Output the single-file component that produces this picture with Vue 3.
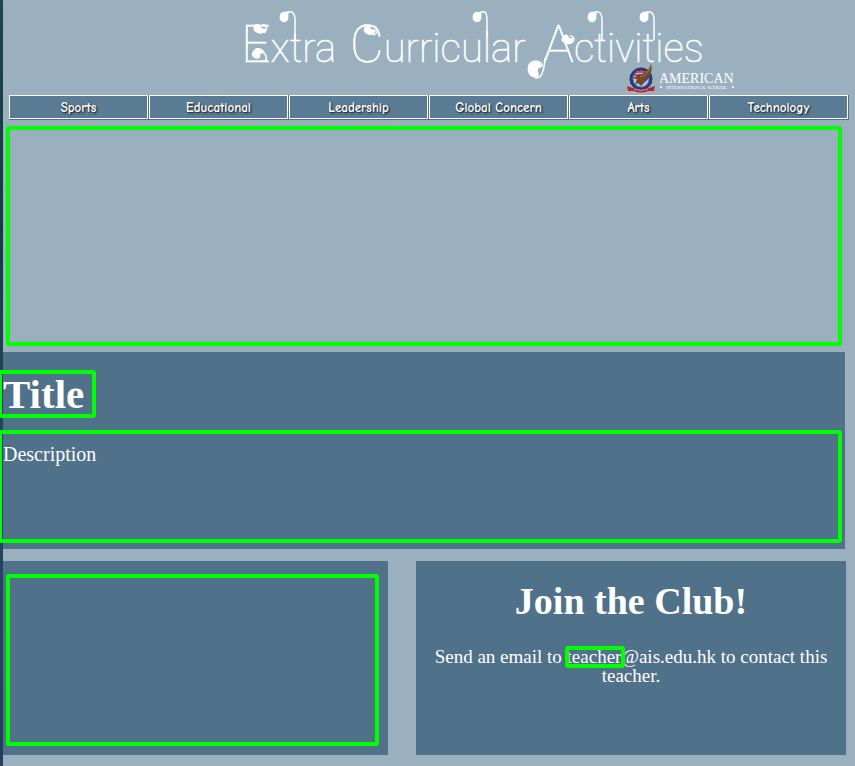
<script setup>
const links = ['Sports', 'Educational', 'Leadership', 'Global Concern', 'Arts', 'Technology']
</script>

<template>
  <div class="page">
    <header class="banner">
      <svg class="banner-art" viewBox="240 0 500 95" width="500" height="95" role="img" aria-label="Extra Curricular Activities, American International School">
        <g class="word">
          <text x="241" y="62"><tspan class="initial">E</tspan>xtra</text>
          <text x="350" y="62"><tspan class="initial">C</tspan>urricular</text>
          <text x="543" y="62"><tspan class="initial">A</tspan>ctivities</text>
        </g>
        <g class="stroke">
          <path d="M285 13C291 10 295 12 295 20V40" />
          <path d="M479 13C485 10 487 12 487 20V36" />
          <path d="M593 13C598 10 602 12 602 20V40" />
          <path d="M644 13C650 10 654 12 654 20V40" />
          <path d="M545 58C544 73 541 79 535 78" />
          <path d="M262 25C267 24 268 29 264 33" />
          <path d="M262 61C267 62 268 57 264 53" />
          <path d="M374 26C379 29 378 34 373 35" />
          <path d="M565 43C574 46 577 36 570 36" />
        </g>
        <g class="blob">
          <path d="M280 15C281 11 287 11 289 14C287 15 290 18 287 21C284 24 278 21 280 15Z" />
          <path d="M473 15C474 11 480 11 482 14C480 15 483 18 480 21C477 24 471 21 473 15Z" />
          <path d="M588 15C589 11 595 11 597 14C595 15 598 18 595 21C592 24 586 21 588 15Z" />
          <path d="M640 15C641 11 647 11 649 14C647 15 650 18 647 21C644 24 638 21 640 15Z" />
          <path d="M254 26C256 22 262 25 261 28L266 29C265 34 259 35 256 32C253 31 253 28 254 26Z" />
          <path d="M253 51C256 46 263 48 265 53L260 54C262 59 256 60 253 57C251 55 252 53 253 51Z" />
          <path d="M364 28C367 24 371 26 371 29L376 30C375 35 370 36 367 34C364 33 363 30 364 28Z" />
          <path d="M562 38C564 33 569 34 569 38L573 38C573 44 566 45 563 42C561 41 561 39 562 38Z" />
          <path d="M528 66C530 59 541 59 543 65C543 69 536 66 538 72C541 78 535 79 531 76C528 74 527 70 528 66Z" />
        </g>
        <g>
          <circle cx="641" cy="79" r="11" fill="#243f86" stroke="#26325c" />
          <circle cx="641" cy="79" r="8" fill="#b9c3df" stroke="#5778bd" />
          <path d="M636 72H647M634 75H648M634 78H647" stroke="#cf4652" stroke-width="2" />
          <path d="M651 64C653 70 650 79 645 82L641 86L638 83L635 85L637 79L634 78L638 75C643 75 649 70 651 64Z" fill="#70472e" />
          <path d="M650 67C648 73 645 76 640 77" fill="none" stroke="#a78154" />
          <path d="M627 86L633 88Q641 91 649 88L655 86L654 91L648 91Q641 94 634 91L628 91Z" fill="#b92431" />
          <path d="M634 89Q641 92 648 89" fill="none" stroke="#ee8c87" />
        </g>
        <text class="school" x="659" y="83">AMERICAN</text>
        <text class="school-sub" x="666" y="89">INTERNATIONAL SCHOOL</text>
        <circle cx="661" cy="87" r="1" fill="#fff" />
        <circle cx="733" cy="87" r="1" fill="#fff" />
      </svg>
    </header>

    <nav class="menu" aria-label="Activities">
      <a v-for="link in links" :key="link" href="#"><span>{{ link }}</span></a>
    </nav>

    <section class="hero frame"></section>

    <section class="panel intro">
      <h1 class="title frame">Title</h1>
      <p class="description frame">Description</p>
    </section>

    <div class="columns">
      <section class="panel media"><div class="media-slot frame"></div></section>
      <section class="panel join">
        <h2>Join the Club!</h2>
        <p>Send an email to <span class="mark">teacher</span>@ais.edu.hk to contact this teacher.</p>
      </section>
    </div>
  </div>
</template>

<style>
body {
  margin: 0;
  background: #9bb0bf;
}
</style>

<style scoped>
.page {
  box-sizing: border-box;
  min-height: 100vh;
  padding: 0 9px 11px 3px;
  overflow: hidden;
  color: #fff;
  font-family: "Liberation Serif", "Times New Roman", serif;
  background: linear-gradient(#17484b, #123c46 30%, #294560 60%, #223f5d) left / 3px 100% no-repeat, #9bb0bf;
}
.banner {
  display: flex;
  justify-content: flex-end;
  padding-right: 106px;
}
.banner-art {
  display: block;
}
.word {
  fill: #fff;
  stroke: #fff;
  stroke-width: 0.5;
  font: 100 40px Roboto, sans-serif;
}
.initial {
  font-size: 52px;
}
.stroke {
  fill: none;
  stroke: #fff;
  stroke-width: 1.5;
}
.blob {
  fill: #fff;
}
.school {
  fill: #fff;
  font-size: 14px;
}
.school-sub {
  fill: #fff;
  font-size: 5px;
}
.menu {
  display: grid;
  grid-template-columns: repeat(6, 1fr);
  margin: 0 -3px 0 6px;
}
.menu a {
  padding: 0 1px 1px 0;
  background: #50718a;
  color: #fff;
  font: bold 13px/20px "Comic Sans MS", "Comic Neue", Lato, sans-serif;
  text-align: center;
  text-decoration: none;
  text-shadow: 1px 1px 2px #111;
}
.menu span {
  display: block;
  padding-top: 2px;
  border: 1px solid #fff;
  background: #5a7b94;
}
.frame {
  box-sizing: border-box;
  border: 4px solid #0f0;
  border-radius: 3px;
}
.hero {
  height: 220px;
  margin: 6px 4px 6px 3px;
}
.panel {
  background: #50718a;
}
.intro {
  display: flow-root;
  margin-right: 1px;
  padding-bottom: 6px;
}
.title {
  width: 98px;
  margin: 18px 0 12px -5px;
  padding-left: 1px;
  font-size: 41px;
  line-height: 40px;
}
.description {
  min-height: 113px;
  margin: 0 3px 0 -5px;
  padding: 8px 1px;
  font-size: 20px;
  line-height: 24px;
}
.columns {
  display: grid;
  grid-template-columns: 385fr 430fr;
  gap: 28px;
  margin-top: 12px;
}
.media {
  padding: 13px 9px 9px 3px;
}
.media-slot {
  height: 172px;
}
.join {
  padding: 0 16px;
  text-align: center;
}
.join h2 {
  margin: 18px 0 24px;
  font-size: 38px;
  line-height: 44px;
}
.join p {
  margin: 0;
  font-size: 19px;
  line-height: 19px;
}
.mark {
  position: relative;
}
.mark::after {
  content: "";
  position: absolute;
  inset: 0 -4px -1px -2px;
  border: 4px solid #0f0;
  border-radius: 3px;
}
</style>
